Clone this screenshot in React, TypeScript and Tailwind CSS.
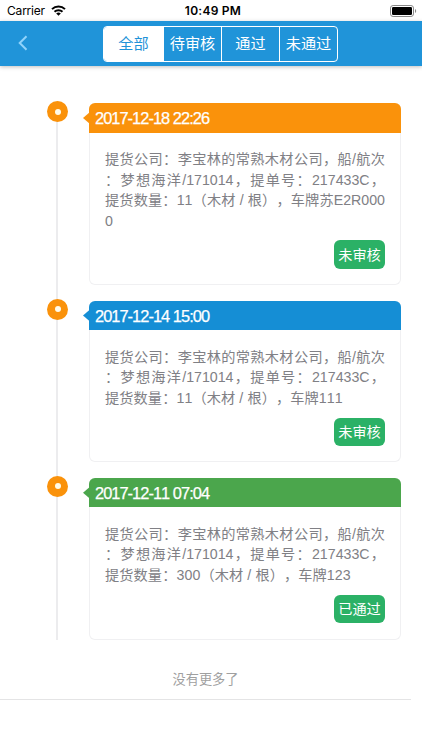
import React from "react";

type Entry = {
  time: string;
  tone: string;
  lines: { text: string; fill: boolean }[];
  status: string;
};

const first = { text: "提货公司：李宝林的常熟木材公司，船/航次", fill: true };
const second = { text: "：梦想海洋/171014，提单号：217433C，", fill: true };

const entries: Entry[] = [
  {
    time: "2017-12-18 22:26",
    tone: "bg-[#fa920b]",
    lines: [
      first,
      second,
      { text: "提货数量：11（木材 / 根），车牌苏E2R000", fill: true },
      { text: "0", fill: false },
    ],
    status: "未审核",
  },
  {
    time: "2017-12-14 15:00",
    tone: "bg-[#158ed5]",
    lines: [first, second, { text: "提货数量：11（木材 / 根），车牌111", fill: false }],
    status: "未审核",
  },
  {
    time: "2017-12-11 07:04",
    tone: "bg-[#4ba64c]",
    lines: [first, second, { text: "提货数量：300（木材 / 根），车牌123", fill: false }],
    status: "已通过",
  },
];

function StatusBar() {
  return (
    <div className="grid h-[21px] grid-cols-3 items-center pr-[5px] pl-[7px] font-['Inter',sans-serif] text-[12px] text-black">
      <div className="flex items-center gap-[6px]">
        <span className="tracking-[-0.15px]">Carrier</span>
        <svg width="15" height="11" viewBox="0 0 15 11" fill="none" stroke="#000" strokeWidth="2">
          <path d="M1 4.1a9.3 9.3 0 0 1 13 0" />
          <path d="M3.5 6.8a5.7 5.7 0 0 1 8 0" />
          <path d="M7.5 10.8L5.2 8.5a3.3 3.3 0 0 1 4.6 0z" fill="#000" stroke="none" />
        </svg>
      </div>
      <span className="pl-[2px] text-center font-semibold tracking-[0.25px] whitespace-nowrap">10:49 PM</span>
      <svg className="justify-self-end" width="27" height="12" viewBox="0 0 27 12">
        <rect x="0.5" y="0.5" width="23" height="11" rx="2.6" fill="none" stroke="#888" />
        <rect x="2" y="2" width="20" height="8" rx="1.2" fill="#000" />
        <path d="M25 4v4c1.6-.6 1.6-3.4 0-4z" fill="#888" />
      </svg>
    </div>
  );
}

function Tab({ label, active = false }: { label: string; active?: boolean }) {
  return (
    <button
      className={`flex items-center justify-center border-white text-[15.2px] ${
        active ? "w-[59px] bg-white text-[#1f93d8]" : "w-[58px] border-l text-white"
      }`}
    >
      {label}
    </button>
  );
}

function TimelineCard({ entry }: { entry: Entry }) {
  return (
    <li className="flex">
      <div className="relative w-[42px] shrink-0">
        <span className="absolute top-[-2px] left-0 flex size-[21px] items-center justify-center rounded-full bg-[#fa920b]">
          <span className="size-[6px] rounded-full bg-[#fffbea]" />
        </span>
      </div>
      <article className="relative w-[312px] rounded-[6px] border border-t-0 border-[#f0f0f2] bg-white">
        <span className={`absolute top-[9px] left-[-7px] h-[12px] w-[7px] [clip-path:polygon(100%_0,100%_100%,0_50%)] ${entry.tone}`} />
        <h2
          className={`-mx-px flex h-[29.6px] items-center rounded-t-[6px] pt-[1px] pl-[6px] text-[16.4px] tracking-[-0.96px] text-white [-webkit-text-stroke:0.25px_white] ${entry.tone}`}
        >
          {entry.time}
        </h2>
        <div className="flex flex-col px-[15px] pt-[16.7px] pb-[15.3px] text-[14.2px] leading-[20.4px] text-[#808085]">
          {entry.lines.map((line, i) => (
            <p key={i} className={`whitespace-nowrap ${line.fill ? "[text-align-last:justify]" : "tracking-[0.1px]"}`}>
              {line.text}
            </p>
          ))}
          <span className="mt-[9.5px] flex h-[28.6px] w-[51px] items-center justify-center self-end rounded-[6px] bg-[#2bb166] text-white">
            {entry.status}
          </span>
        </div>
      </article>
    </li>
  );
}

export default function App() {
  return (
    <div className="h-[750px] w-[422px] overflow-hidden bg-white font-['Liberation_Sans','Noto_Sans_CJK_SC',sans-serif] [font-kerning:none] [text-spacing-trim:space-all]">
      <StatusBar />
      <header className="flex h-[44.5px] bg-[#2094d9] pt-[5px] shadow-[0_1px_4px_rgba(0,0,0,0.25)]">
        <button className="ml-[18px] flex h-[33px] w-[85px] items-center" aria-label="返回">
          <svg width="10" height="16" viewBox="0 0 10 16" fill="none" stroke="#90d3fb" strokeWidth="2">
            <path d="M8.5 1.2L1.7 8l6.8 6.8" />
          </svg>
        </button>
        <nav className="flex h-[36px] overflow-hidden rounded-[4px] border border-white">
          <Tab label="全部" active />
          <Tab label="待审核" />
          <Tab label="通过" />
          <Tab label="未通过" />
        </nav>
      </header>
      <main className="pt-[37.5px] pl-[47px]">
        <ol className="flex flex-col gap-[15.3px] bg-[linear-gradient(#ececee,#ececee)] bg-[length:2px_100%] bg-[position:9px_0] bg-no-repeat">
          {entries.map((entry) => (
            <TimelineCard key={entry.time} entry={entry} />
          ))}
        </ol>
      </main>
      <footer className="flex h-[60px] w-[411px] items-center justify-center border-b border-[#e4e4e5] pt-[22px] text-[13.2px] text-[#a0a0a0]">
        没有更多了
      </footer>
    </div>
  );
}
